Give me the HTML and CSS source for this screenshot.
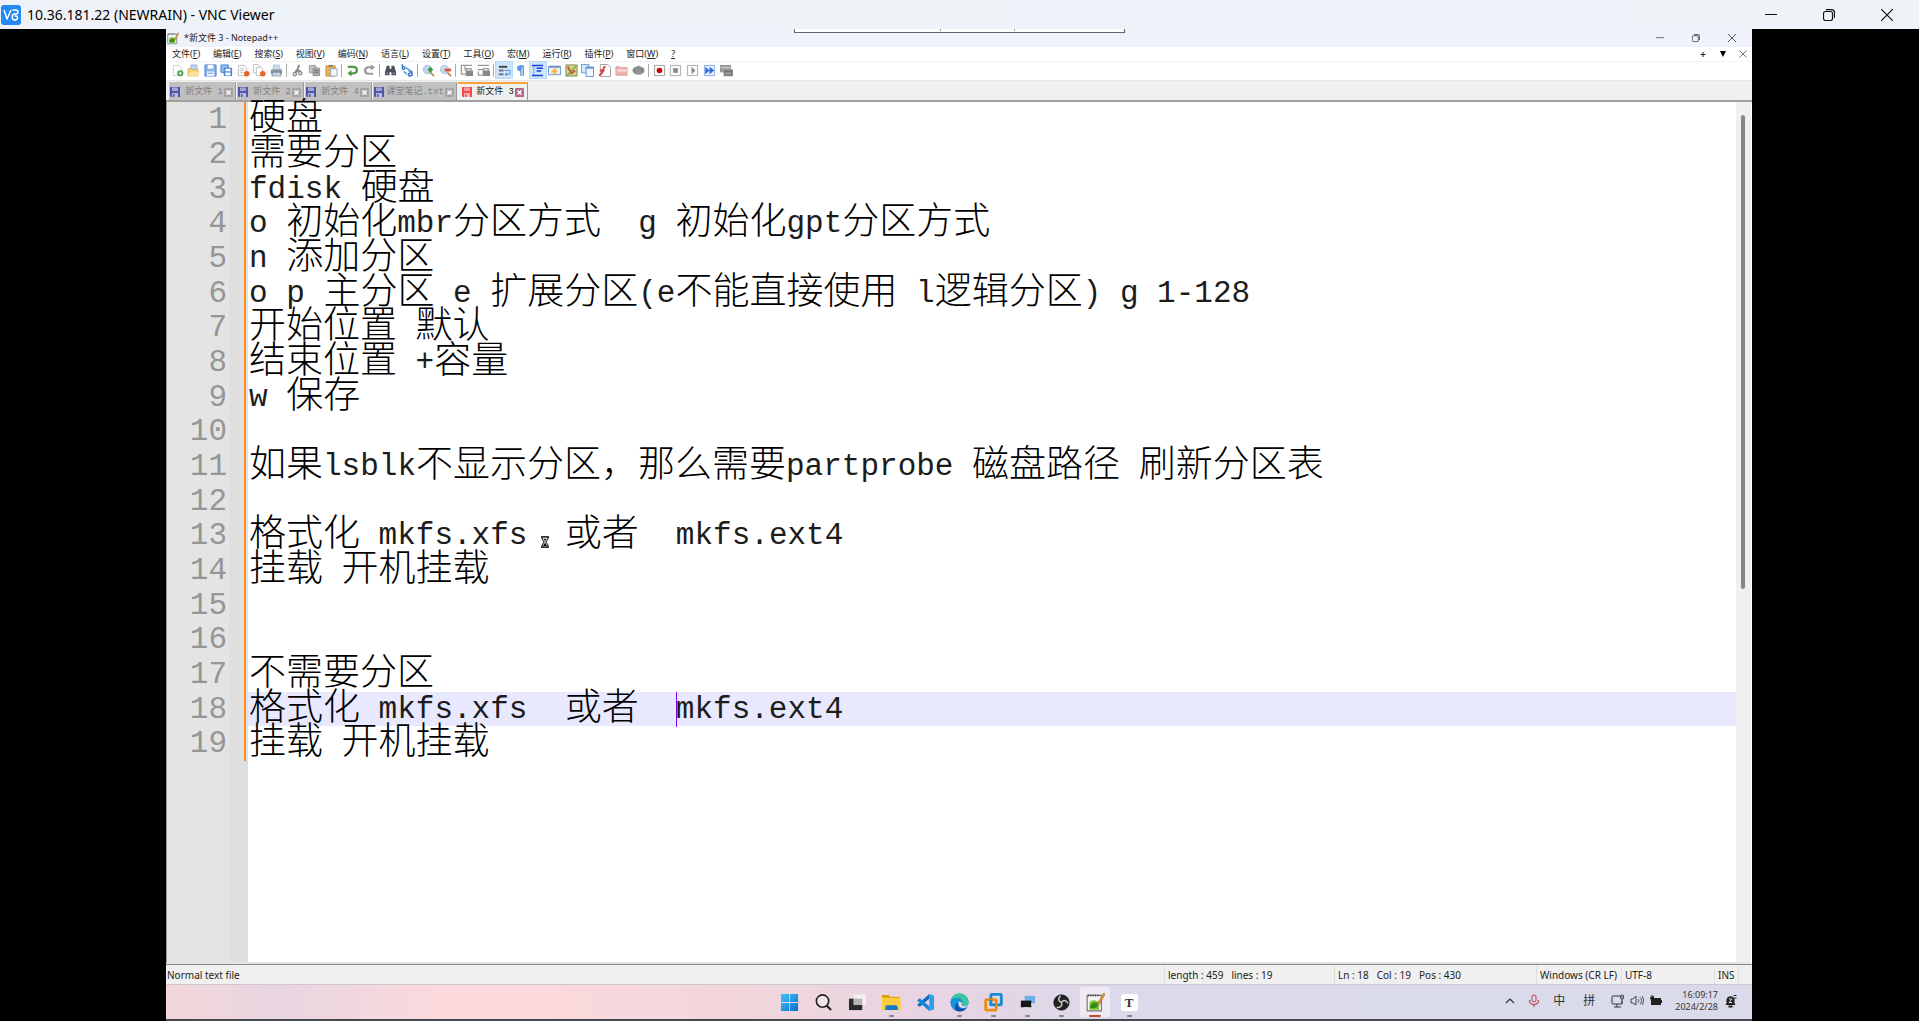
FILE: index.html
```html
<!DOCTYPE html>
<html lang="zh-CN">
<head>
<meta charset="utf-8">
<title>10.36.181.22 (NEWRAIN) - VNC Viewer</title>
<link rel="stylesheet" href="styles.css">
</head>
<body>
<svg class="defs" aria-hidden="true">
  <symbol id="i-min" viewBox="0 0 12 12"><path d="M0 5.5h12" stroke="currentColor" fill="none"/></symbol>
  <symbol id="i-restore" viewBox="0 0 12 12"><path d="M2.5 2.5h5a2 2 0 0 1 2 2v5a2 2 0 0 1-2 2h-5a2 2 0 0 1-2-2v-5a2 2 0 0 1 2-2zM3 .7h5.500a3 3 0 0 1 3 3V9" stroke="currentColor" stroke-width="1.200" fill="none"/></symbol>
  <symbol id="i-close" viewBox="0 0 12 12"><path d="M0 0l12 12M12 0L0 12" stroke="currentColor" stroke-width="1.200" fill="none"/></symbol>
  <symbol id="i-npp" viewBox="0 0 16 16"><path d="M1 2h12v13H1z" fill="#f4f4f0" stroke="#777"/><path d="M2 1v2M4 1v2M6 1v2M8 1v2M10 1v2" stroke="#555" stroke-width=".8"/><path d="M3 8c2-3 7-2 8 1l0 5H3z" fill="#79c52c"/><path d="M3 12c1-4 5-5 8-3-1 3-4 5-8 3z" fill="#2f8a1d"/><path d="M15 0l1 1-5 9-2 1 1-3z" fill="#e8a33c" stroke="#8c5a1b" stroke-width=".5"/></symbol>
  <symbol id="i-disk" viewBox="0 0 10 10"><path d="M0 0h10v10H1L0 9z" fill="currentColor"/><path d="M2 .5h6v3.500H2z" fill="#fff" opacity=".45"/><path d="M2 6h6v4H2z" fill="#fff" opacity=".6"/><path d="M3 7h1.500v3H3z" fill="currentColor"/></symbol>
  <symbol id="i-x" viewBox="0 0 9 9"><path d="M.5.5h8v8h-8z" fill="currentColor" stroke="currentColor"/><path d="M2.500 2.500l4 4M6.500 2.500l-4 4" stroke="#fff" stroke-width="1.500"/></symbol>
</svg>

<header class="viewer-bar">
  <svg class="vnc-logo" viewBox="0 0 20 20"><rect width="20" height="20" rx="3" fill="#2488f5"/><path d="M3 5l3 9 4-9" stroke="#fff" stroke-width="1.500" fill="none" stroke-linejoin="round"/><path d="M11.500 5h3.500c2.500 0 2.500 4 0 4h-1.500c-3 0-3 6 0 6 3.500 0 4-4 1.500-4h-1.500" stroke="#fff" stroke-width="1.500" fill="none" stroke-linejoin="round"/></svg>
  <h1>10.36.181.22 (NEWRAIN) - VNC Viewer</h1>
  <div class="viewer-controls">
    <button aria-label="Minimize"><svg><use href="#i-min"/></svg></button>
    <button aria-label="Restore"><svg><use href="#i-restore"/></svg></button>
    <button aria-label="Close"><svg><use href="#i-close"/></svg></button>
  </div>
</header>

<main class="viewer">
  <div class="pull-tab"><i></i><i></i></div>
  <div class="desktop">
    <section class="npp">
      <div class="npp-title">
        <svg class="npp-icon"><use href="#i-npp"/></svg>
        <h2>*新文件 3 - Notepad++</h2>
        <div class="npp-controls">
          <button aria-label="最小化"><svg><use href="#i-min"/></svg></button>
          <button aria-label="还原"><svg><use href="#i-restore"/></svg></button>
          <button aria-label="关闭"><svg><use href="#i-close"/></svg></button>
        </div>
      </div>
      <nav class="menu">
        <button>文件(<u>F</u>)</button><button>编辑(<u>E</u>)</button><button>搜索(<u>S</u>)</button><button>视图(<u>V</u>)</button><button>编码(<u>N</u>)</button><button>语言(<u>L</u>)</button><button>设置(<u>T</u>)</button><button>工具(<u>O</u>)</button><button>宏(<u>M</u>)</button><button>运行(<u>R</u>)</button><button>插件(<u>P</u>)</button><button>窗口(<u>W</u>)</button><button><u>?</u></button>
        <div class="menu-end">
          <button aria-label="新建"><svg viewBox="0 0 8 8"><path d="M1.500 4.500h5M4 2v5" stroke="#222"/></svg></button>
          <button aria-label="列表"><svg viewBox="0 0 8 8"><path d="M1 1h6L4 7z" fill="#000"/></svg></button>
          <button aria-label="关闭文件"><svg viewBox="0 0 8 8"><path d="M.5.5l7 7M7.500.5l-7 7" stroke="#777"/></svg></button>
        </div>
      </nav>
      <div class="tools">
        <div class="group g7">
          <button aria-label="新建"><svg viewBox="0 0 14 14"><path d="M2.500 1.500h6l3 3v8h-9z" fill="#fff" stroke="#c9ccd0"/><circle cx="10" cy="10" r="3.300" fill="#3f9a3a"/><path d="M8 10h4M10 8v4" stroke="#fff"/></svg></button>
          <button aria-label="打开"><svg viewBox="0 0 14 14"><path d="M4 1h7v7H4z" fill="#b9d3f3" stroke="#7fa3d6" stroke-width=".6"/><path d="M1 5h4l1 1h6v7H1z" fill="#f6cf73" stroke="#dba449" stroke-width=".7"/><path d="M1 13l2-5h11l-2 5z" fill="#fbe0a0"/></svg></button>
          <button aria-label="保存"><svg viewBox="0 0 14 14"><path d="M1 1h12v12H1z" fill="#8ab0ea" stroke="#4b7fd0"/><path d="M4 1h6v4H4z" fill="#fff"/><path d="M3 8h8v5H3z" fill="#e9f1fc"/><path d="M4 10h6" stroke="#6f9ce0"/></svg></button>
          <button aria-label="全部保存"><svg viewBox="0 0 14 14"><path d="M1 1h8v8H1z" fill="#9dbdee" stroke="#4b7fd0"/><path d="M4.500 4.500h8v8h-8z" fill="#7ba6e7" stroke="#3e72c4"/><path d="M6 5h5v2.500H6zM6 9.500h5v3H6z" fill="#fff"/></svg></button>
          <button aria-label="关闭"><svg viewBox="0 0 14 14"><path d="M1.500 1.500h6l3 3v8h-9z" fill="#fff" stroke="#bbb"/><path d="M3 5h5M3 7h5M3 9h4" stroke="#aaa" stroke-width=".7"/><circle cx="10.500" cy="10.500" r="3" fill="#e5652c"/></svg></button>
          <button aria-label="全部关闭"><svg viewBox="0 0 14 14"><path d="M.5.5h5l2 2v7h-7z" fill="#fff" stroke="#bbb"/><path d="M3.500 3.500h5l2 2v7h-7z" fill="#fff" stroke="#bbb"/><circle cx="10.500" cy="10.500" r="3" fill="#e5652c"/></svg></button>
          <button aria-label="打印"><svg viewBox="0 0 14 14"><path d="M4 1h6l1 5H3z" fill="#c5dcf5" stroke="#8fa9c6" stroke-width=".6"/><path d="M1 6h12v5H1z" fill="#8b9199"/><path d="M3 9h8l1 4H2z" fill="#c6d8ec" stroke="#777" stroke-width=".6"/></svg></button>
        </div>
        <i class="sep"></i>
        <div class="group g3">
          <button aria-label="剪切"><svg viewBox="0 0 14 14"><path d="M9 1L5 10M10 7L4 8" stroke="#888" stroke-width="2"/><circle cx="4" cy="11" r="1.800" fill="none" stroke="#888" stroke-width="1.400"/><circle cx="10" cy="10" r="1.800" fill="none" stroke="#888" stroke-width="1.400"/></svg></button>
          <button aria-label="复制"><svg viewBox="0 0 14 14"><path d="M1.500 1.500h7v8h-7z" fill="#c6c6c6" stroke="#999"/><path d="M5.500 4.500h7v8h-7z" fill="#aaa" stroke="#888"/><path d="M7 7h4M7 9h4" stroke="#666"/></svg></button>
          <button aria-label="粘贴"><svg viewBox="0 0 14 14"><path d="M1 2h10v11H1z" fill="#efb04d" stroke="#b98234" stroke-width=".8"/><path d="M4 1h4v2H4z" fill="#777"/><path d="M6 5h7v8H6z" fill="#f3f7fd" stroke="#7794bd" stroke-width=".8"/></svg></button>
        </div>
        <i class="sep"></i>
        <div class="group g2">
          <button aria-label="撤销"><svg viewBox="0 0 14 14"><path d="M2 3h6c5 0 5 7 0 7H5" stroke="#4c9e43" stroke-width="2.400" fill="none"/><path d="M6 6.500v7L1.500 10z" fill="#4c9e43"/></svg></button>
          <button aria-label="重做"><svg viewBox="0 0 14 14"><path d="M10 3.500H6c-5 0-5 7 0 7h5" stroke="#999" stroke-width="2.400" fill="none"/><path d="M8.500.5v6.500l4.500-3.500z" fill="#999"/></svg></button>
        </div>
        <i class="sep"></i>
        <div class="group g2">
          <button aria-label="查找"><svg viewBox="0 0 14 14"><path d="M3 2h3v3h2V2h3l2 7v3H8V9H6v3H1V9z" fill="#4b535d"/><path d="M2.500 10h2M9.500 10h2" stroke="#aeb7c3"/></svg></button>
          <button aria-label="替换"><svg viewBox="0 0 14 14"><path d="M1.500 0v6M1.500 3c3-1 4 3 0 3" stroke="#3f79cc" stroke-width="1.500" fill="none"/><path d="M8 7.500c4-1 4 1 4 5.500M12 9.500c-5 0-5 3.500-2 3.500l2-1" stroke="#3f79cc" stroke-width="1.700" fill="none"/><path d="M5 4l4 2M3 8l3 3" stroke="#3ba3d8" stroke-width="1.600"/></svg></button>
        </div>
        <i class="sep"></i>
        <div class="group g2">
          <button aria-label="放大"><svg viewBox="0 0 14 14"><circle cx="6" cy="6" r="4.500" fill="#bcd6f2" stroke="#9bb9dc"/><path d="M9 9l4 4" stroke="#c28b52" stroke-width="2"/><path d="M9 3l3 3-3 4-3-4z" fill="#419b44"/></svg></button>
          <button aria-label="缩小"><svg viewBox="0 0 14 14"><circle cx="6" cy="6" r="4.500" fill="#c8dcf4" stroke="#a9bfe0"/><path d="M9 9l4 4" stroke="#c28b52" stroke-width="2"/><path d="M6 5h7v3H6z" fill="#e2533f"/></svg></button>
        </div>
        <i class="sep"></i>
        <div class="group g2">
          <button aria-label="垂直同步"><svg viewBox="0 0 14 14"><path d="M1 1.500h12M1.500 1v10h4M5.500 1v6M7 7V5h5v2" stroke="#999" stroke-width="1.400" fill="none"/><path d="M6 7h8v6H6z" fill="#888"/></svg></button>
          <button aria-label="水平同步"><svg viewBox="0 0 14 14"><path d="M1 1.500h12M1 6h6M1.500 8v4h4M7 7V5h5v2" stroke="#999" stroke-width="1.400" fill="none"/><path d="M6 7h8v6H6z" fill="#888"/></svg></button>
        </div>
        <i class="sep"></i>
        <div class="group g9">
          <button class="on" aria-label="自动换行"><svg viewBox="0 0 14 14"><path d="M1 3h9" stroke="#444" stroke-width="2"/><path d="M1 7h5M1 11h5" stroke="#777" stroke-width="2"/><path d="M7 7h6v4H9" stroke="#5b8fd8" fill="none"/><path d="M10 9v4l-3-2z" fill="#5b8fd8"/></svg></button>
          <button aria-label="显示符号"><svg viewBox="0 0 14 14"><path d="M10 2H6.500a2.500 2.500 0 0 0 0 5H7M7.500 2v11M10 2v11" stroke="#5d9be6" stroke-width="1.500" fill="#5d9be6"/></svg></button>
          <button class="on" aria-label="缩进"><svg viewBox="0 0 14 14"><path d="M1 1.500h12M6 4.500h7M6 7.500h5M1 12.500h12" stroke="#1c3fd6" stroke-width="1.600"/><path d="M3 3v9" stroke="#1c3fd6" stroke-dasharray="1 1"/></svg></button>
          <button aria-label="语言"><svg viewBox="0 0 14 14"><path d="M.5 2.500h13v9H.5z" fill="#e8effa" stroke="#6d92ca"/><path d="M1 3h12" stroke="#6d92ca" stroke-width="2"/><path d="M8 4L3 9h3l-1 4 6-6H7l3-3z" fill="#f6b62d"/></svg></button>
          <button aria-label="文档地图"><svg viewBox="0 0 14 14"><path d="M1 1h12v12H1z" fill="#cfd783" stroke="#7c8554"/><path d="M3 3l4 7 4-3" stroke="#d2503a" stroke-width="2" fill="none"/><path d="M2 13l10-11" stroke="#6da34f" stroke-width="1.500"/></svg></button>
          <button aria-label="文档列表"><svg viewBox="0 0 14 14"><path d="M.5.5h8v9h-8z" fill="#d9e8fb" stroke="#5f93d8"/><path d="M5.500 3.500h8v10h-8z" fill="#eef5fe" stroke="#5f93d8"/><path d="M5 4h9" stroke="#5f93d8" stroke-width="2"/></svg></button>
          <button aria-label="函数列表"><svg viewBox="0 0 14 14"><path d="M2.500.5h8l3 3v10h-11z" fill="#fff" stroke="#999"/><path d="M8 3C5 2 6 12 1 12M2 7h5" stroke="#d13c3c" stroke-width="2" fill="none"/></svg></button>
          <button aria-label="文件夹"><svg viewBox="0 0 14 14"><path d="M1 3h4l1 1h7v8H1z" fill="#efb3ae" stroke="#d99992"/><path d="M2 7h11" stroke="#fae0de" stroke-width="2"/></svg></button>
          <button aria-label="监视"><svg viewBox="0 0 14 14"><ellipse cx="7" cy="7" rx="6.500" ry="4.500" fill="#929292"/><path d="M3 5v4M11 5v4M7 2v3" stroke="#858585" stroke-width="2"/></svg></button>
        </div>
        <i class="sep"></i>
        <div class="group g5">
          <button aria-label="录制"><svg viewBox="0 0 14 14"><path d="M1.500 1.500h11v11h-11z" fill="#fafafa" stroke="#999"/><circle cx="7" cy="7" r="3" fill="#c80000"/></svg></button>
          <button aria-label="停止"><svg viewBox="0 0 14 14"><path d="M1.500 1.500h11v11h-11z" fill="#fafafa" stroke="#aaa"/><path d="M4.500 4.500h5v5h-5z" fill="#888"/></svg></button>
          <button aria-label="播放"><svg viewBox="0 0 14 14"><path d="M1.500 1.500h11v11h-11z" fill="#fafafa" stroke="#aaa"/><path d="M6 3l4 4-4 4z" fill="#888"/></svg></button>
          <button aria-label="多次播放"><svg viewBox="0 0 14 14"><path d="M1.500 1.500h11v11h-11z" fill="#e8f0fd" stroke="#88a9dd"/><path d="M2.500 3l4.500 4-4.500 4zM7 3l5 4-5 4z" fill="#2f6bd0"/></svg></button>
          <button aria-label="保存宏"><svg viewBox="0 0 14 14"><path d="M0 1h12v8H0z" fill="#999"/><path d="M1 4h10" stroke="#ddd"/><path d="M4 6h10v7H4z" fill="#777" stroke="#bbb" stroke-width=".6"/><path d="M6 10h6" stroke="#ccc"/></svg></button>
        </div>
      </div>
      <div class="tabs">
        <button class="tab"><svg class="disk"><use href="#i-disk"/></svg><span>新文件 1</span><svg class="x"><use href="#i-x"/></svg></button>
        <button class="tab"><svg class="disk"><use href="#i-disk"/></svg><span>新文件 2</span><svg class="x"><use href="#i-x"/></svg></button>
        <button class="tab"><svg class="disk"><use href="#i-disk"/></svg><span>新文件 4</span><svg class="x"><use href="#i-x"/></svg></button>
        <button class="tab long"><svg class="disk"><use href="#i-disk"/></svg><span>课堂笔记.txt</span><svg class="x"><use href="#i-x"/></svg></button>
        <button class="tab active"><svg class="disk"><use href="#i-disk"/></svg><span>新文件 3</span><svg class="x"><use href="#i-x"/></svg></button>
      </div>
      <div class="editor">
        <div class="numbers">
          <div class="row">1</div><div class="row">2</div><div class="row">3</div><div class="row">4</div><div class="row">5</div><div class="row">6</div><div class="row">7</div><div class="row">8</div><div class="row">9</div><div class="row">10</div><div class="row">11</div><div class="row">12</div><div class="row">13</div><div class="row">14</div><div class="row">15</div><div class="row">16</div><div class="row">17</div><div class="row">18</div><div class="row">19</div>
        </div>
        <div class="code">
          <div class="row"><b>硬盘</b></div>
          <div class="row"><b>需要分区</b></div>
          <div class="row">fdisk <b>硬盘</b></div>
          <div class="row">o <b>初始化</b>mbr<b>分区方式</b>  g <b>初始化</b>gpt<b>分区方式</b></div>
          <div class="row">n <b>添加分区</b></div>
          <div class="row">o p <b>主分区</b> e <b>扩展分区</b>(e<b>不能直接使用</b> l<b>逻辑分区</b>) g 1-128</div>
          <div class="row"><b>开始位置</b> <b>默认</b></div>
          <div class="row"><b>结束位置</b> +<b>容量</b></div>
          <div class="row">w <b>保存</b></div>
          <div class="row"></div>
          <div class="row"><b>如果</b>lsblk<b>不显示分区，那么需要</b>partprobe <b>磁盘路径</b> <b>刷新分区表</b></div>
          <div class="row"></div>
          <div class="row"><b>格式化</b> mkfs.xfs<span class="pointer"><svg viewBox="0 0 8 12"><path d="M0 1h8M0 11h8" stroke="#000" stroke-width="1.500"/><path d="M1 1h6v2L5 6l2 3v2H1V9l2-3-2-3z" fill="#bbb" stroke="#222"/><path d="M2 10l2-3 2 3zM3 3h2L4 5z" fill="#000"/></svg></span>  <b>或者</b>  mkfs.ext4</div>
          <div class="row"><b>挂载</b> <b>开机挂载</b></div>
          <div class="row"></div>
          <div class="row"></div>
          <div class="row"><b>不需要分区</b></div>
          <div class="row current"><b>格式化</b> mkfs.xfs  <b>或者</b>  <i class="caret"></i>mkfs.ext4</div>
          <div class="row"><b>挂载</b> <b>开机挂载</b></div>
        </div>
        <div class="scroll"><div class="thumb"></div></div>
      </div>
      <footer class="status">
        <span class="type">Normal text file</span>
        <span class="size"><span>length : 459</span><span>lines : 19</span></span>
        <span class="place"><span>Ln : 18</span><span>Col : 19</span><span>Pos : 430</span></span>
        <span class="eol">Windows (CR LF)</span>
        <span class="enc">UTF-8</span>
        <span class="ins">INS</span>
        <span class="grip"></span>
      </footer>
    </section>

    <div class="taskbar">
      <div class="apps">
        <button aria-label="开始"><svg viewBox="0 0 20 20"><defs><linearGradient id="w" x2="1" y2="1"><stop stop-color="#3fc3f7"/><stop offset="1" stop-color="#0a6fd0"/></linearGradient></defs><path d="M1 1h8.600v8.600H1zM10.400 1H19v8.600h-8.600zM1 10.400h8.600V19H1zM10.400 10.400H19V19h-8.600z" fill="url(#w)"/></svg></button>
        <button aria-label="搜索"><svg viewBox="0 0 20 20"><circle cx="9" cy="8.500" r="6.500" fill="#f0e4ec" stroke="#222" stroke-width="1.700"/><path d="M13.500 13.500L18 18" stroke="#222" stroke-width="2.200"/></svg></button>
        <button aria-label="任务视图"><svg viewBox="0 0 20 20"><path d="M1 6h14v12H1z" fill="#2b2b2b"/><path d="M6 1.500h13v11H6z" fill="#f4f4f4" opacity=".88"/><path d="M6 6h9v6.500H6z" fill="#b5b5b5"/></svg></button>
        <button class="open" aria-label="文件资源管理器"><svg viewBox="0 0 20 20"><path d="M0 2h7l2 2h10v6H0z" fill="#d9a008"/><path d="M0 5h19.500v13H0z" fill="#fccb3f"/><path d="M3.500 18v-3a2 2 0 0 1 2-2h9a2 2 0 0 1 2 2v3z" fill="#1478c8"/></svg></button>
        <button aria-label="VS Code"><svg viewBox="0 0 20 20"><path d="M14 1l5 2v14l-5 2z" fill="#27a0ee"/><path d="M14 1v5L4 14.500 1 12.500z" fill="#0d6fbb"/><path d="M14 19v-5L4 5.500 1 7.500z" fill="#1686d4"/></svg></button>
        <button class="open" aria-label="Edge"><svg viewBox="0 0 20 20"><circle cx="10" cy="10" r="9.500" fill="#1b7fd3"/><path d="M1 8C2 2 8-1 13 1c5 1 8 7 6 11-2 3-6 2-7 1 2-4-1-6-4-6-3-1-6 0-7 1z" fill="#3cc6a0"/><path d="M1 8c4-5 13-3 12 2H9c-3 0-4 4-2 8C2 17 0 12 1 8z" fill="#1494df"/><path d="M8.500 10c-2 5 3 9 9 5.500-3 4-7 5-11 3-2-3-1-8 2-8.500z" fill="#124f9f"/><path d="M9 9.500c2-1 4 .5 3 2.500 0 2 5 3 7 0-1 5-9 5-10 0z" fill="#efdfee"/></svg></button>
        <button class="open" aria-label="VMware"><svg viewBox="0 0 20 20"><rect x="7.200" y="1.500" width="11" height="11" rx="1" fill="none" stroke="#168dd0" stroke-width="3"/><rect x="1.800" y="7" width="11" height="11" rx="1" fill="none" stroke="#f08a12" stroke-width="3"/><path d="M7.200 7v5.500H12" fill="none" stroke="#168dd0" stroke-width="2.600"/></svg></button>
        <button class="open" aria-label="远程"><svg viewBox="0 0 20 20"><path d="M7 3h11v8H7z" fill="#6fb0ea"/><path d="M3 8h11v7H3z" fill="#161616"/><path d="M6 15h5v2H6zM14 11h2v2h-2z" fill="#ddd"/></svg></button>
        <button class="open" aria-label="OBS"><svg viewBox="0 0 20 20"><circle cx="10" cy="10" r="8" fill="#222" stroke="#111"/><path d="M9 3c-3 3-2 6 1 7M17 11c-2-4-6-4-7-1M5 15c4 1 6-2 5-5" stroke="#ccc" stroke-width="1.500" fill="none"/></svg></button>
        <button class="open current-app" aria-label="Notepad++"><svg viewBox="0 0 16 16"><use href="#i-npp"/></svg></button>
        <button class="open" aria-label="Typora"><span class="typora">T</span></button>
      </div>
      <div class="tray">
        <button class="chev" aria-label="更多"><svg viewBox="0 0 10 10"><path d="M1 7l4-4 4 4" fill="none" stroke="#333" stroke-width="1.200"/></svg></button>
        <button class="mic" aria-label="麦克风"><svg viewBox="0 0 12 14"><rect x="4" y="1" width="4" height="7" rx="2" fill="none" stroke="#b7474a"/><path d="M1.500 6c0 6 9 6 9 0M6 10.500V13" fill="none" stroke="#b7474a" stroke-width="1.200"/></svg></button>
        <button class="ime">中</button>
        <button class="ime">拼</button>
        <button class="sys" aria-label="系统">
          <svg viewBox="0 0 14 14"><path d="M9 2H2a1 1 0 0 0-1 1v6a1 1 0 0 0 1 1h9V7M6 10v3M3 13h7" fill="none" stroke="#333"/><rect x="9.500" y="1" width="3" height="4" rx="1" fill="#999" stroke="#333" stroke-width=".8"/><path d="M11 5v4" stroke="#333"/></svg>
          <svg viewBox="0 0 14 14"><path d="M1 5h2l3-3v9L3 9H1zM8 5c1 1 1 2 0 3.500M10 3.500c2 2 2 4 0 6.500M12 2c2 3 2 6 0 9" fill="none" stroke="#333" stroke-width=".9"/></svg>
          <svg viewBox="0 0 14 14"><path d="M2 4h10v2h1v3h-1v2H2z" fill="#222"/><path d="M1 3l4-1v4l-3 1z" fill="#222"/><path d="M3 1v2" stroke="#222"/></svg>
        </button>
        <button class="clock"><time>16:09:17</time><time>2024/2/28</time></button>
        <button class="bell" aria-label="通知"><svg viewBox="0 0 12 14"><path d="M1 11l1-2V6c0-5 8-5 8 0v3l1 2z" fill="#222"/><path d="M4 12.500h4" stroke="#222" stroke-width="2"/><path d="M4.500 5h3l-3 3.500h3" stroke="#ddd" fill="none"/><path d="M9 1.500h3M9 4h3" stroke="#222"/></svg></button>
      </div>
    </div>
  </div>
</main>
</body>
</html>
```
FILE: styles.css
```css
* { box-sizing: border-box; }

body {
  margin: 0;
  height: 100vh;
  display: flex;
  flex-direction: column;
  background: #000;
  color: #111;
  font-family: "Noto Sans", "Noto Sans CJK SC", sans-serif;
  overflow: hidden;
}

button {
  margin: 0;
  padding: 0;
  border: 0;
  background: none;
  color: inherit;
  font: inherit;
  display: flex;
  align-items: center;
  justify-content: center;
}

h1, h2 { margin: 0; font-weight: 400; }
svg { display: block; flex: none; }
.defs { position: absolute; width: 0; height: 0; }

/* Viewer window */
.viewer-bar {
  flex: none;
  height: 29px;
  display: flex;
  align-items: center;
  padding-left: 1px;
  background: linear-gradient(90deg, #eff3f9, #edf3f7 40%, #eff2f9 60%, #eff3f8);
}
.vnc-logo { width: 20px; height: 20px; margin-right: 6px; }
.viewer-bar h1 { font-size: 14px; line-height: 20px; color: #000; }
.viewer-controls { display: flex; margin-left: auto; margin-right: 3px; }
.viewer-controls button { width: 58px; height: 28px; }
.viewer-controls svg { width: 12px; height: 12px; }

.viewer {
  position: relative;
  flex: 1;
  min-height: 0;
  display: flex;
  padding: 0 167px 0 166px;
}
.pull-tab {
  position: absolute;
  inset: 0 0 auto;
  margin: 0 auto;
  width: 331px;
  height: 4px;
  display: flex;
  gap: 73px;
  padding-left: 145px;
  background: #fff;
  border: 1px solid #666;
  border-top: 0;
}
.pull-tab i { width: 1px; height: 2px; background: #999; }

.desktop { flex: 1; min-width: 0; display: flex; flex-direction: column; }

/* Editor window */
.npp { flex: 1; min-height: 0; display: flex; flex-direction: column; background: #fff; }
.npp-title {
  flex: none;
  height: 18px;
  display: flex;
  align-items: center;
  padding-left: 1px;
  background: #eff2fb;
}
.npp-icon { width: 12px; height: 13px; margin-right: 5px; }
.npp-title h2 { font-size: 9px; line-height: 16px; color: #222; }
.npp-controls { display: flex; margin-left: auto; margin-right: 2px; color: #333; }
.npp-controls button { width: 36px; height: 18px; }
.npp-controls svg { width: 8px; height: 8px; }

.menu {
  flex: none;
  height: 15px;
  display: flex;
  align-items: center;
  gap: 13px;
  padding-left: 6px;
  border-bottom: 1px solid #f2f2f2;
  font-size: 9px;
  line-height: 14px;
  color: #222;
}
.menu-end { display: flex; gap: 12px; margin-left: auto; margin-right: 5px; }
.menu-end svg { width: 8px; height: 8px; }

.tools {
  flex: none;
  height: 19px;
  display: flex;
  align-items: center;
  padding: 0 0 2px 3px;
  border-bottom: 1px solid #e6e6e6;
}
.group { display: flex; justify-content: space-between; }
.group button { width: 16px; height: 16px; }
.group svg { width: 13px; height: 13px; }
.group .on { background: #cce5fb; outline: 1px solid #b5d9f8; }
.g2 { width: 33px; }
.g3 { width: 50px; }
.g5 { width: 83px; }
.g7 { width: 115px; }
.g9 { width: 150px; }
.sep { width: 1px; height: 13px; margin: 0 2px; background: #aaa; }

.tabs {
  flex: none;
  height: 21px;
  display: flex;
  align-items: stretch;
  gap: 1px;
  padding: 1px 0 0 3px;
  background: #f0f0f0;
  border-bottom: 2px solid #a0a0a0;
}
.tab {
  width: 67px;
  padding: 2px 2px 0 1px;
  background: #c0c0c0;
  color: #808080;
  font: 9px/14px "Liberation Mono", "Noto Sans CJK SC", monospace;
  white-space: pre;
  border-right: 1px solid #999;
}
.tab span { flex: 1; padding-right: 1px; text-align: right; }
.tab.long { width: 84px; }
.tab .disk { width: 10px; height: 10px; color: #5356a8; }
.tab .x { width: 9px; height: 9px; color: #a5a5a5; }
.tab.active { width: 70px; padding: 0 3px 0 4px; background: #f0f0f0; color: #222; border-top: 2px solid #faa23c; }
.tab.active .disk { color: #f04a4a; }
.tab.active .x { color: #b06a8c; }

.editor {
  flex: 1;
  min-height: 0;
  display: flex;
  margin-right: 1px;
  border-left: 1px solid #999;
  border-bottom: 2px solid #e4e4e4;
  font: 31px/35px "Liberation Mono", "Noto Sans CJK SC", monospace;
}
.row { height: 35px; white-space: pre; }
.row:nth-child(3n) { height: 34px; }
.numbers {
  width: 81px;
  background: linear-gradient(90deg, #e4e4e4 62px, #dfdfdf 62px);
  color: #969696;
}
.numbers .row { margin-right: 2px; padding-right: 17px; text-align: right; border-right: 2px solid #ff8c1a; }
.code { flex: 1; min-width: 0; color: #1c1c1c; }
.code .row { padding-left: 1px; }
.code b {
  font-family: "Noto Sans CJK SC", sans-serif;
  font-weight: 300;
  font-size: 37px;
  line-height: 0;
  vertical-align: -2px;
  color: #000;
}
.code .current { background: #e8e8ff; }
.caret { display: inline-block; width: 1px; height: 35px; margin-right: -1px; background: #8000ff; vertical-align: top; }
.pointer { position: relative; }
.pointer svg { position: absolute; left: 14px; top: 18px; width: 8px; height: 12px; }
.scroll { width: 15px; padding: 13px 0 0 5px; background: #f0f0f0; }
.thumb { width: 4px; height: 56%; background: #868686; border-radius: 2px; }

.status {
  flex: none;
  height: 20px;
  display: flex;
  align-items: center;
  background: #f0f0f0;
  border-top: 1px solid #888;
  font-size: 10px;
  line-height: 18px;
  color: #222;
}
.status > span { padding-left: 3px; border-left: 1px solid #ddd; white-space: nowrap; }
.status > .type { flex: 1; padding-left: 1px; border: 0; }
.size, .place { display: flex; gap: 8px; }
.size { width: 170px; }
.place { width: 202px; }
.eol { width: 85px; }
.enc { width: 93px; }
.ins { width: 24px; }
.grip { width: 14px; height: 18px; }

/* Taskbar */
.taskbar {
  flex: none;
  height: 37px;
  display: grid;
  grid-template-columns: 1fr auto 1fr;
  align-items: center;
  background: linear-gradient(90deg, #f3d7da, #e8d5e1 7%, #fbd9dc 17%, #fbd9dc 24%, #f1d6dc 37%, #e8d3e3 48%, #dadaea 60%, #dadbea);
  border-top: 1px solid #cfc6cf;
  border-bottom: 2px solid #484850;
}
.apps { grid-column: 2; display: flex; gap: 4px; }
.apps button { position: relative; width: 30px; height: 30px; border-radius: 3px; }
.apps svg { width: 19px; height: 19px; }
.apps .open::after {
  content: "";
  position: absolute;
  left: 13px;
  bottom: 0;
  width: 5px;
  height: 2px;
  border-radius: 1px;
  background: #85808c;
}
.apps .current-app { background: #efeaf3; }
.apps .current-app::after { left: 9px; width: 12px; background: #cf4334; }
.typora {
  width: 17px;
  height: 17px;
  border-radius: 3px;
  background: #fff;
  font: 700 13px/17px "Liberation Serif", serif;
  color: #333;
}
.tray { display: flex; justify-content: flex-end; align-items: center; padding: 0 15px 2px 0; color: #333; }
.chev svg { width: 10px; height: 10px; }
.mic { margin-left: 13px; }
.mic svg { width: 12px; height: 14px; }
.ime { width: 30px; font-size: 12px; line-height: 16px; }
.mic + .ime { margin-left: 4px; }
.sys { margin-left: 7px; gap: 5px; }
.sys svg { width: 14px; height: 14px; }
.clock { flex-direction: column; align-items: flex-end; margin-left: 12px; font-size: 9px; line-height: 12px; }
.bell { margin-left: 6px; }
.bell svg { width: 13px; height: 14px; }
```
